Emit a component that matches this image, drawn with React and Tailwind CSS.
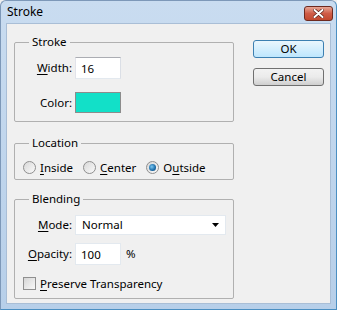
import React from 'react'

const font = { fontFamily: '"Noto Sans", "Open Sans", sans-serif' }

const U = ({ children }) => <span className="underline underline-offset-2">{children}</span>

const Radio = ({ checked }) => (
    <span className="w-[13px] h-[13px] rounded-full border border-[#8f8f8f] bg-gradient-to-br from-[#d8d8d8] to-[#fafafa] flex items-center justify-center shrink-0">
        {checked && <span className="w-[7px] h-[7px] rounded-full bg-[radial-gradient(circle_at_40%_40%,#7cc8f2,#1a6aa6_60%,#0b3f6b)]" />}
    </span>
)

const Group = ({ title, className, children }) => (
    <div className={`relative border border-[#b0b0b0] rounded-[2px] ${className}`}>
        <span className="absolute -top-[9px] left-[14px] px-[3px] bg-[#f0f0f0] leading-[16px]">{title}</span>
        {children}
    </div>
)

const App = () => {
    return (
        <div className="w-[337px] h-[310px] bg-[#f0f0f0] text-[11.5px] text-black" style={font}>
            <div className="w-full h-full flex flex-col rounded-t-[6px] border border-[#4b8fc2] border-t-[#7d98b8] border-l-[#7d98b8] bg-gradient-to-b from-[#c9dcf0] to-[#b7cfe9]">
                {/* title bar */}
                <div className="h-[22px] flex items-center justify-between pl-[6px] pr-[3px]">
                    <span className="text-[12px]">Stroke</span>
                    <div className="w-[29px] h-[15px] mt-[2px] rounded-[3px] border border-[#6d2a20] bg-gradient-to-b from-[#e6a696] via-[#cf5c47] to-[#c2492f] flex items-center justify-center">
                        <svg width="11" height="9" viewBox="0 0 11 9">
                            <path d="M1.5 1 L9.5 8 M9.5 1 L1.5 8" stroke="#5a2118" strokeWidth="3.4" strokeLinecap="round" />
                            <path d="M1.5 1 L9.5 8 M9.5 1 L1.5 8" stroke="#fff" strokeWidth="2" strokeLinecap="round" />
                        </svg>
                    </div>
                </div>
                {/* client */}
                <div className="flex-1 mx-[5px] mb-[5px] bg-[#f0f0f0] border border-[#a9bed6] flex">
                    <div className="w-[220px] ml-[7px] flex flex-col">
                        <Group title="Stroke" className="mt-[18px] h-[80px]">
                            <div className="grid grid-cols-[57px_46px] gap-x-[3px] gap-y-[13px] pt-[14px] items-center">
                                <span className="text-right"><U>W</U>idth:</span>
                                <input
                                    className="h-[22px] w-[46px] bg-white border border-[#abadb3] border-l-[#e2e3ea] border-r-[#dbdfe6] border-b-[#e3e9ef] px-[5px] outline-none"
                                    defaultValue="16"
                                />
                                <span className="text-right">Color:</span>
                                <div className="h-[21px] w-[46px] border border-[#8c8c8c] bg-[#12e0c8]" />
                            </div>
                        </Group>
                        <Group title="Location" className="mt-[21px] h-[37px]">
                            <div className="flex items-center pt-[15px] pl-[8px]">
                                <label className="flex items-center gap-[4px]"><Radio /><span><U>I</U>nside</span></label>
                                <label className="flex items-center gap-[4px] ml-[10px]"><Radio /><span><U>C</U>enter</span></label>
                                <label className="flex items-center gap-[4px] ml-[10px]"><Radio checked /><span>O<U>u</U>tside</span></label>
                            </div>
                        </Group>
                        <Group title="Blending" className="mt-[19px] h-[100px]">
                            <div className="grid grid-cols-[57px_auto] gap-x-[3px] pt-[15px] items-center">
                                <span className="text-right"><U>M</U>ode:</span>
                                <div className="h-[20px] w-[151px] bg-white border border-[#e3e9ef] flex items-center justify-between pl-[6px] pr-[6px]">
                                    <span>Normal</span>
                                    <svg width="7" height="4" viewBox="0 0 7 4"><path d="M0 0 H7 L3.5 4 Z" fill="#000" /></svg>
                                </div>
                                <span className="text-right mt-[8px]"><U>O</U>pacity:</span>
                                <div className="flex items-center mt-[8px]">
                                    <input
                                        className="h-[22px] w-[46px] bg-white border border-[#e3e9ef] px-[5px] outline-none"
                                        defaultValue="100"
                                    />
                                    <span className="ml-[5px]">%</span>
                                </div>
                            </div>
                            <label className="flex items-center gap-[4px] pl-[8px] mt-[10px]">
                                <span className="w-[13px] h-[13px] border border-[#8f8f8f] bg-gradient-to-br from-[#d6d6d6] to-[#f8f8f8] shrink-0" />
                                <span><U>P</U>reserve Transparency</span>
                            </label>
                        </Group>
                    </div>
                    <div className="ml-[19px] mt-[16px] flex flex-col gap-[10px]">
                        <button className="w-[71px] h-[18px] rounded-[3px] border border-[#3c7fb1] bg-gradient-to-b from-[#eaf6fd] to-[#bee6fd] leading-none">OK</button>
                        <button className="w-[71px] h-[18px] rounded-[3px] border border-[#707070] bg-gradient-to-b from-[#f2f2f2] via-[#ebebeb] to-[#cfcfcf] leading-none">Cancel</button>
                    </div>
                </div>
            </div>
        </div>
    )
}

export default App
